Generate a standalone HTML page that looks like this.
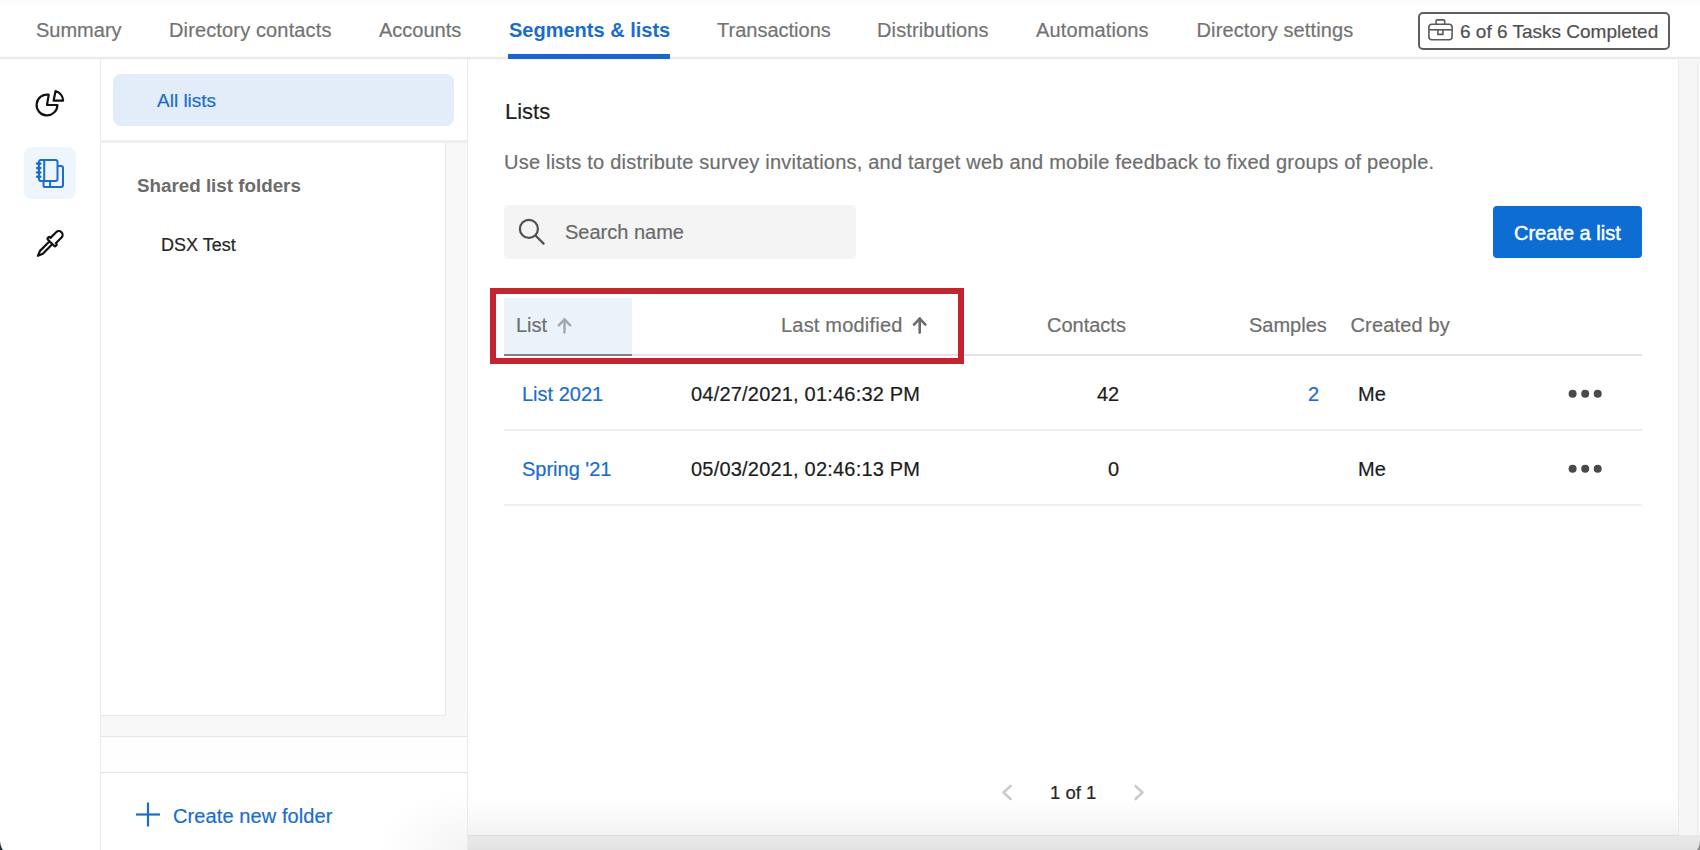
<!DOCTYPE html>
<html><head><meta charset="utf-8">
<style>
html,body{margin:0;padding:0;width:1700px;height:850px;overflow:hidden;background:#fff;}
body{font-family:"Liberation Sans",sans-serif;position:relative;}
.a{position:absolute;}
.t{position:absolute;white-space:nowrap;line-height:1;-webkit-text-stroke:0.2px currentColor;}
svg{position:absolute;overflow:visible;}
</style></head><body>

<!-- top header -->
<div class="a" style="left:0;top:0;width:1700px;height:4px;background:#fcfcfc"></div>
<div class="a" style="left:0;top:56px;width:1700px;height:1px;background:#fafafa"></div>
<div class="a" style="left:0;top:57px;width:1700px;height:2px;background:#ebebeb"></div>
<div class="a" style="left:0;top:59px;width:1700px;height:1px;background:#f8f8f8"></div>
<div class="t" style="left:36px;top:20px;font-size:20px;color:#737373">Summary</div>
<div class="t" style="left:169px;top:20px;font-size:20px;color:#737373;letter-spacing:0.14px">Directory contacts</div>
<div class="t" style="left:379px;top:20px;font-size:20px;color:#737373">Accounts</div>
<div class="t" style="left:509px;top:20px;font-size:20px;color:#1a6dcc;font-weight:bold;-webkit-text-stroke:0">Segments &amp; lists</div>
<div class="a" style="left:508px;top:54px;width:162px;height:5px;background:#1867cb"></div>
<div class="t" style="left:717px;top:20px;font-size:20px;color:#737373">Transactions</div>
<div class="t" style="left:877px;top:20px;font-size:20px;color:#737373;letter-spacing:0.12px">Distributions</div>
<div class="t" style="left:1036px;top:20px;font-size:20px;color:#737373;letter-spacing:0.14px">Automations</div>
<div class="t" style="left:1196.5px;top:20px;font-size:20px;color:#737373;letter-spacing:0.14px">Directory settings</div>

<!-- tasks button -->
<div class="a" style="left:1418px;top:12px;width:248px;height:34px;border:2px solid #5f5f5f;border-radius:5px"></div>
<svg style="left:1428px;top:19px" width="26" height="22" viewBox="0 0 26 22">
  <g fill="none" stroke="#5a5a5a" stroke-width="1.6" stroke-linejoin="round">
    <path d="M8.1 5.2 L8.1 2.1 Q8.1 0.9 9.3 0.9 L15.5 0.9 Q16.7 0.9 16.7 2.1 L16.7 5.2"/>
    <rect x="0.9" y="5.3" width="23.2" height="15.5" rx="3"/>
    <line x1="0.9" y1="10.8" x2="24.1" y2="10.8"/>
    <path d="M9.9 10.8 L9.9 15.4 L15 15.4 L15 10.8"/>
  </g>
</svg>
<div class="t" style="left:1460px;top:22px;font-size:19px;color:#505050">6 of 6 Tasks Completed</div>

<!-- left icon rail -->
<div class="a" style="left:100px;top:59px;width:1px;height:791px;background:#eaeaea"></div>
<svg style="left:0;top:0" width="100" height="300">
  <g fill="none" stroke="#111" stroke-width="2.2" stroke-linejoin="round">
    <path d="M47 105 L57.4 105 A10.4 10.4 0 1 1 48.7 94.7 Z"/>
    <path d="M53.6 100.7 L55.5 91.1 A9.8 9.8 0 0 1 63.1 100.7 Z"/>
  </g>
</svg>
<div class="a" style="left:24px;top:147px;width:52px;height:52px;border-radius:8px;background:#eef5fd"></div>
<svg style="left:0;top:0" width="100" height="300">
  <g fill="none" stroke="#1a6dcc" stroke-width="2" stroke-linejoin="round">
    <path d="M44 166 L61 166 Q63 166 63 168 L63 185 Q63 187 61 187 L45 187 Q43.5 187 43.5 185.5 L43.5 181"/>
    <line x1="50.1" y1="181" x2="50.1" y2="187"/>
    <rect x="39" y="160" width="18.5" height="21" rx="2" fill="#eef5fd"/>
    <line x1="44.2" y1="160" x2="44.2" y2="181"/>
  </g>
  <g stroke="#1a6dcc" stroke-width="2.6" stroke-linecap="round">
    <line x1="37.2" y1="163.6" x2="40.2" y2="163.6"/>
    <line x1="37.2" y1="168.1" x2="40.2" y2="168.1"/>
    <line x1="37.2" y1="172.5" x2="40.2" y2="172.5"/>
    <line x1="37.2" y1="176.8" x2="40.2" y2="176.8"/>
  </g>
</svg>
<svg style="left:0;top:0" width="100" height="300">
  <g transform="translate(49.9 243.8) rotate(-45)" fill="none" stroke="#111" stroke-width="2.2" stroke-linejoin="round">
    <path d="M1.6 -4.6 Q1.6 -5.6 2.6 -5.6 L3.6 -5.6 Q4.6 -5.6 4.6 -4.6 L4.6 -3.8 L12.6 -3.8 A3.8 3.8 0 0 1 12.6 3.8 L4.6 3.8 L4.6 4.6 Q4.6 5.6 3.6 5.6 L2.6 5.6 Q1.6 5.6 1.6 4.6 Z"/>
    <path d="M1.6 -2 L-12 -2 L-17 0 L-12 2 L1.6 2"/>
  </g>
</svg>

<!-- sidebar -->
<div class="a" style="left:113px;top:74px;width:341px;height:52px;border-radius:8px;background:#e3edf9"></div>
<div class="t" style="left:157px;top:90.7px;font-size:19px;color:#1a6dcc">All lists</div>
<div class="a" style="left:101px;top:140px;width:366px;height:3px;background:#efefef"></div>
<div class="a" style="left:446px;top:143px;width:20px;height:593px;background:#f8f8f8"></div>
<div class="a" style="left:445px;top:143px;width:1px;height:573px;background:#e8e8e8"></div>
<div class="a" style="left:101px;top:715px;width:345px;height:1px;background:#e8e8e8"></div>
<div class="a" style="left:101px;top:716px;width:366px;height:20px;background:#f8f8f8"></div>
<div class="a" style="left:101px;top:736px;width:366px;height:1px;background:#e6e6e6"></div>
<div class="a" style="left:101px;top:737px;width:366px;height:35px;background:#fefefe"></div>
<div class="a" style="left:101px;top:772px;width:366px;height:1px;background:#e6e6e6"></div>
<div class="a" style="left:367px;top:780px;width:100px;height:70px;background:radial-gradient(ellipse 90px 60px at 100% 100%,#f4f4f4,rgba(255,255,255,0))"></div>
<div class="a" style="left:467px;top:59px;width:1px;height:791px;background:#eaeaea"></div>
<div class="t" style="left:137px;top:177px;font-size:18.8px;color:#6b6b6b;font-weight:bold;-webkit-text-stroke:0">Shared list folders</div>
<div class="t" style="left:161px;top:236px;font-size:18px;color:#262626">DSX Test</div>
<svg style="left:0;top:0" width="200" height="850">
  <g stroke="#1a6dcc" stroke-width="2.2"><line x1="136" y1="814.5" x2="160" y2="814.5"/><line x1="148" y1="802.5" x2="148" y2="826.5"/></g>
</svg>
<div class="t" style="left:173px;top:805.5px;font-size:20px;color:#1a6dcc;letter-spacing:0.1px">Create new folder</div>

<!-- main -->
<div class="t" style="left:505px;top:100.5px;font-size:22px;color:#1f1f1f">Lists</div>
<div class="t" style="left:504px;top:151.6px;font-size:20px;color:#6e6e6e;letter-spacing:0.22px">Use lists to distribute survey invitations, and target web and mobile feedback to fixed groups of people.</div>

<div class="a" style="left:504px;top:205px;width:352px;height:54px;border-radius:4px;background:#f4f4f4"></div>
<svg style="left:0;top:0" width="700" height="300">
  <g fill="none" stroke="#505050" stroke-width="2.2" stroke-linecap="round"><circle cx="528.9" cy="228.9" r="9"/><line x1="535.5" y1="235.5" x2="543.6" y2="243.6"/></g>
</svg>
<div class="t" style="left:565px;top:222px;font-size:20px;color:#6a6a6a">Search name</div>

<div class="a" style="left:1493px;top:206px;width:149px;height:52px;border-radius:4px;background:#0d6dd3"></div>
<div class="t" style="left:1514px;top:222.7px;font-size:20px;color:#fff;-webkit-text-stroke:0.45px #fff">Create a list</div>

<!-- table header -->
<div class="a" style="left:504px;top:298px;width:128px;height:56px;background:#ecf2f9"></div>
<div class="a" style="left:504px;top:354px;width:1138px;height:2px;background:#e3e3e3"></div>
<div class="a" style="left:504px;top:354px;width:128px;height:2px;background:#7b8081"></div>
<div class="t" style="left:516px;top:314.9px;font-size:20px;color:#6b6f73">List</div>
<svg style="left:0;top:0" width="1000" height="400">
  <g fill="none" stroke="#a3a7ab" stroke-width="2.4" stroke-linecap="round" stroke-linejoin="round"><line x1="564.5" y1="319.5" x2="564.5" y2="332.5"/><path d="M558.8 325.3 L564.5 319.4 L570.2 325.3"/></g>
  <g fill="none" stroke="#6b6b6b" stroke-width="2.6" stroke-linecap="round" stroke-linejoin="round"><line x1="919.7" y1="318.6" x2="919.7" y2="332.6"/><path d="M914 324.6 L919.7 318.6 L925.4 324.6"/></g>
</svg>
<div class="t" style="left:781px;top:314.9px;font-size:20px;color:#6e6e6e;letter-spacing:0.2px">Last modified</div>
<div class="t" style="left:1047px;top:314.9px;font-size:20px;color:#6e6e6e">Contacts</div>
<div class="t" style="left:1249px;top:314.9px;font-size:20px;color:#6e6e6e">Samples</div>
<div class="t" style="left:1350.5px;top:314.9px;font-size:20px;color:#6e6e6e;letter-spacing:0.15px">Created by</div>

<!-- red highlight -->
<div class="a" style="left:490px;top:288px;width:462px;height:64px;border:6px solid #c4232f"></div>

<!-- rows -->
<div class="t" style="left:522px;top:384.1px;font-size:20px;color:#1a6dcc">List 2021</div>
<div class="t" style="left:691px;top:384.1px;font-size:20px;color:#1c1c1c;letter-spacing:0.2px">04/27/2021, 01:46:32 PM</div>
<div class="t" style="left:1097px;top:384.1px;font-size:20px;color:#1c1c1c">42</div>
<div class="t" style="left:1308px;top:384.1px;font-size:20px;color:#1a6dcc">2</div>
<div class="t" style="left:1358px;top:384.1px;font-size:20px;color:#1c1c1c">Me</div>
<div class="a" style="left:504px;top:429px;width:1138px;height:2px;background:#efefef"></div>

<div class="t" style="left:522px;top:458.5px;font-size:20px;color:#1a6dcc">Spring '21</div>
<div class="t" style="left:691px;top:458.5px;font-size:20px;color:#1c1c1c;letter-spacing:0.2px">05/03/2021, 02:46:13 PM</div>
<div class="t" style="left:1108px;top:458.5px;font-size:20px;color:#1c1c1c">0</div>
<div class="t" style="left:1358px;top:458.5px;font-size:20px;color:#1c1c1c">Me</div>
<div class="a" style="left:504px;top:504px;width:1138px;height:2px;background:#efefef"></div>

<svg style="left:0;top:0" width="1700" height="600">
  <g fill="#4a4a4a">
    <circle cx="1572.6" cy="393.8" r="4"/><circle cx="1585.2" cy="393.8" r="4"/><circle cx="1597.7" cy="393.8" r="4"/>
    <circle cx="1572.6" cy="468.8" r="4"/><circle cx="1585.2" cy="468.8" r="4"/><circle cx="1597.7" cy="468.8" r="4"/>
  </g>
</svg>

<!-- pagination -->
<div class="a" style="left:468px;top:795px;width:1210px;height:40px;background:linear-gradient(#fff,#fbfbfb 40%,#f3f3f3)"></div>
<svg style="left:0;top:0" width="1700" height="850">
  <g fill="none" stroke="#cbcbcb" stroke-width="2.6" stroke-linecap="round" stroke-linejoin="round"><path d="M1010.5 786 L1003.5 792.5 L1010.5 799"/><path d="M1135.5 786 L1142.5 792.5 L1135.5 799"/></g>
</svg>
<div class="t" style="left:1050px;top:784.1px;font-size:18.5px;color:#262626">1 of 1</div>

<!-- right strip & bottom -->
<div class="a" style="left:1678px;top:60px;width:22px;height:790px;background:#f6f6f6"></div>
<div class="a" style="left:1678px;top:60px;width:1px;height:776px;background:#e9e9e9"></div>
<div class="a" style="left:1697px;top:60px;width:1px;height:790px;background:#ededed"></div>
<div class="a" style="left:468px;top:835px;width:1232px;height:15px;background:linear-gradient(#e9e9e9,#e2e2e2)"></div>
<div class="a" style="left:468px;top:835px;width:1211px;height:1px;background:#dadada"></div>

<svg style="left:0;top:838px" width="4" height="12"><path d="M0 3 Q0.5 9 3 12 L0 12 Z" fill="#1d2a38"/></svg>
<svg style="left:1696px;top:838px" width="4" height="12"><path d="M4 3 Q3.5 9 1 12 L4 12 Z" fill="#8a8a8a"/></svg>
</body></html>
